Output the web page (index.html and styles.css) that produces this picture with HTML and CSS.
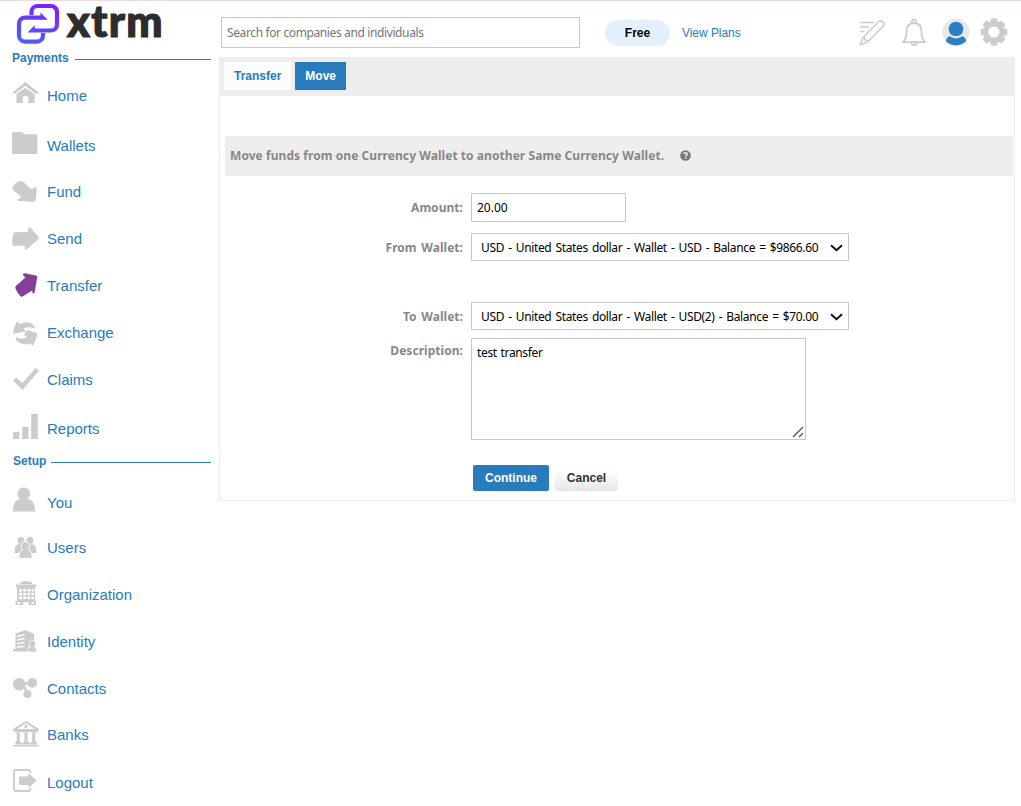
FILE: index.html
```html
<!DOCTYPE html>
<html lang="en">
<head>
    <meta charset="UTF-8">
    <meta name="viewport" content="width=device-width, initial-scale=1.0">
    <title>XTRM - Move Funds</title>
    <link rel="stylesheet" href="styles.css">
</head>

<body>
    <div class="page">
        <aside class="sidebar">
            <a class="logo" href="#">
                <svg width="44" height="42" viewBox="0 0 44 42">
                    <defs>
                        <linearGradient id="logoFill" gradientUnits="userSpaceOnUse" x1="30" y1="0" x2="14" y2="42">
                            <stop offset="0" stop-color="#7d1fff"/>
                            <stop offset="1" stop-color="#4c5ff5"/>
                        </linearGradient>
                    </defs>
                    <g fill="none" stroke="url(#logoFill)" stroke-width="4.200">
                        <path d="M25 14.600H9a6 6 0 0 0-6 6V32.600a6 6 0 0 0 6 6H21a6 6 0 0 0 6-6V30"/>
                        <path d="M18 27.500H35a6 6 0 0 0 6-6V9a6 6 0 0 0-6-6H21.500a6 6 0 0 0-6 6V12"/>
                    </g>
                    <path fill="url(#logoFill)" d="M24.500 9.500L31.700 16.700H24.500zM18.700 22.200L11.500 29.600H18.700z"/>
                </svg>
                <span class="logo-text">xtrm</span>
            </a>

            <h2 class="nav-title">Payments</h2>
            <ul class="nav">
                <li><a href="#">
                    <svg class="icon" viewBox="0 0 30 30"><path d="M2.500 11.500L15.300 1 28.300 11.300 26.300 13 15.300 4.700 4.500 13zM6.500 13L15.300 6.700 24.500 13V22H18.300V17.500a2.800 2.800 0 0 0-5.600 0V22H6.500z"/></svg>
                    Home</a></li>
                <li class="wallets"><a href="#">
                    <svg class="icon" viewBox="0 0 30 30"><path d="M2 2.500Q2 1 3.500 1H12Q13.500 1 13.500 3.200H26Q27.500 3.200 27.500 5V21.500Q27.500 23 26 23H3.500Q2 23 2 21.500z"/></svg>
                    Wallets</a></li>
                <li class="fund"><a href="#">
                    <svg class="icon" viewBox="0 0 30 30"><path d="M2.500 11Q5 5 10.500 4Q12 3.800 13 4.800L21 12Q23.500 11.500 25 10Q26.700 9.500 26.700 11.500Q26.700 18 25.500 23.500Q25 25 23.500 24.800L8.500 24Q7 23.500 8 22Q10.500 21 11 19.500L3 13Q2 12 2.500 11z"/></svg>
                    Fund</a></li>
                <li><a href="#">
                    <svg class="icon" viewBox="0 0 30 30"><path d="M2.300 20.500Q2 14 3.500 9.500Q4 8.200 5.500 8.200L18 8Q18 5.500 18.500 4Q19.500 2.700 20.700 4L28.500 13Q29.200 14.200 28.300 15.200L16.500 25.500Q14.800 26.200 14.800 24.500V21.600L4 22Q2.500 22 2.300 20.500z"/></svg>
                    Send</a></li>
                <li><a href="#">
                    <svg class="icon active" viewBox="0 0 30 30"><path d="M13 3.200Q13 2 14.500 2.200L26 4.500Q27.300 5 27.200 6.500L24.600 21.500Q24 23 22.500 22L22.300 19.500L12.500 25.500Q11 26.300 10 24.800Q6.500 21 5.300 17Q5 15.500 6.300 14.500L15.500 6.500Q13 5 13 3.200z"/></svg>
                    Transfer</a></li>
                <li><a href="#">
                    <svg class="icon" viewBox="0 0 30 30"><path d="M7.500 3L9.500 6Q19 1.500 24.800 8.500L24.500 10.500Q18 8 14 10.500Q13.500 12 16.500 13.500Q12 14 3 15.700Q4 8 7.500 3zM27.200 14.500Q26.500 22 22.500 28L20.500 25.500Q11 28 5.800 21.500L5.800 19Q12 22 16.500 19.500Q17 18 14 17Q16 12 19.500 12.500Q22 15 27.200 14.500z"/></svg>
                    Exchange</a></li>
                <li><a href="#">
                    <svg class="icon" viewBox="0 0 30 30"><path d="M3 15.500L6.300 12.500 12.300 18 25.800 3 29 5.800 12.500 25z"/></svg>
                    Claims</a></li>
                <li class="reports"><a href="#">
                    <svg class="icon" viewBox="0 0 30 30"><path d="M3.200 18H9.500V25H3.200zM12.200 13H18.500V25H12.200zM21.200 0H27.800V25H21.200z"/></svg>
                    Reports</a></li>
            </ul>

            <h2 class="nav-title setup">Setup</h2>
            <ul class="nav">
                <li><a href="#">
                    <svg class="icon" viewBox="0 0 30 30"><path d="M13.800 -.500a6.300 6.300 0 0 1 4 11.200Q25 13 25 21V23.500H3V21Q3 13 9.800 10.700A6.300 6.300 0 0 1 13.800 -.500z"/></svg>
                    You</a></li>
                <li class="users"><a href="#">
                    <svg class="icon" viewBox="0 0 30 30">
                        <circle cx="11" cy="7.500" r="3.500"/><circle cx="20" cy="7.500" r="3.500"/>
                        <path d="M5 20V15.500Q5 11 11 11H20Q26 11 26 15.500V20H5z"/>
                        <path stroke="#fff" stroke-width="1" d="M9 25.500V21.500Q9 18 13 16.800A4.200 4.500 0 1 1 18 16.800Q22 18 22 21.500V25.500z"/>
                    </svg>
                    Users</a></li>
                <li><a href="#">
                    <svg class="icon" viewBox="0 0 30 30"><path fill-rule="evenodd" d="M10 2.500Q16 -.5 22 2.500V4H10zM6 4.500H26V7H6zM7 7H25V21H7zM9 9V11.500H12V9zM13.300 9V11.500H16.300V9zM17.600 9V11.500H20.300V9zM21.600 9V11.500H23.800V9zM9 12.800V15.300H12V12.800zM13.300 12.800V15.300H16.300V12.800zM17.600 12.800V15.300H20.300V12.800zM21.600 12.800V15.300H23.800V12.800zM9 16.600V19H12V16.600zM13.300 16.600V19H16.300V16.600zM17.600 16.600V19H20.300V16.600zM21.600 16.600V19H23.800V16.600z"/><path fill-rule="evenodd" d="M5.500 21H26V25H18.500V22H13V25H5.500zM7.500 22V24H10V22zM21.500 22V24H24V22z"/></svg>
                    Organization</a></li>
                <li><a href="#">
                    <svg class="icon" viewBox="0 0 30 30">
                        <path d="M5.500 6.500L16 3V23.500H5.500zM16 3L24 7V13Q20 13 19.500 18L18 21V23.500H16zM3 22H20V24.500H3z"/>
                        <path fill="none" stroke="#fff" stroke-width="1.300" d="M7 9.500L14.500 7.500M7 13L14.500 11.500M7 16.600L14.500 15.500M7 20L14.500 19.500"/>
                        <path stroke="#fff" stroke-width=".6" d="M18 25V22.500Q18 20.500 20.500 19.800A3.200 3.500 0 1 1 24 19.800Q26.600 20.500 26.600 22.500V25z"/>
                    </svg>
                    Identity</a></li>
                <li><a href="#">
                    <svg class="icon" viewBox="0 0 30 30"><circle cx="9.300" cy="10.300" r="6.300"/><circle cx="22.300" cy="8.800" r="4.900"/><circle cx="17.500" cy="20" r="4"/><path fill="none" stroke="#ccc" stroke-width="2.500" d="M10 10L22 9M13 11L18 20"/></svg>
                    Contacts</a></li>
                <li class="banks"><a href="#">
                    <svg class="icon" viewBox="0 0 30 30">
                        <path fill-rule="evenodd" d="M3 9L16 1 29 9V10.500H3zM7 9H25L16 3.200zM4 10.500H28V12H4zM5 23H27.500V24.500H5zM3 25H29V26.500H3z"/>
                        <circle cx="16" cy="6.500" r="1.700"/>
                        <path d="M6 12.500H10.500V13.500H6zM13.800 12.500H18.300V13.500H13.800zM21.500 12.500H26V13.500H21.500zM6.700 13H9.800V23H6.700zM14.500 13H17.600V23H14.500zM22.200 13H25.300V23H22.200zM5.700 21.500H10.800V23H5.700zM13.500 21.500H18.600V23H13.500zM21.200 21.500H26.300V23H21.200z"/>
                    </svg>
                    Banks</a></li>
                <li class="logout"><a href="#">
                    <svg class="icon" viewBox="0 0 30 30"><path fill="none" stroke="#ccc" stroke-width="1.800" d="M20.500 5V3.500Q20.500 2 19 2H5.500Q4 2 4 3.500V21.500Q4 23 5.500 23H19Q20.500 23 20.500 21.500V20"/><path d="M9 9.500Q9 8.500 10 8.500H18.500V5L26.500 12.500 18.500 20V17H10Q9 17 9 16z"/></svg>
                    Logout</a></li>
            </ul>
        </aside>

        <main class="content">
            <header class="topbar">
                <input type="text" class="search" placeholder="Search for companies and individuals">
                <span class="plan">Free</span>
                <a class="view-plans" href="#">View Plans</a>
                <div class="top-icons">
                    <svg width="28" height="30" viewBox="0 0 28 30" fill="none" stroke="#ccc" stroke-width="1.500" stroke-linejoin="round">
                        <path d="M2 5.500H16M2 10H11M2 14.500H6.500"/>
                        <path d="M2.500 27.500L5 20.500 20.800 4.500Q23 3 25 5Q27 7 25.200 9.300L9.500 25zM5 20.500Q7.500 21 7 23Q9.500 22.500 9.500 25"/>
                    </svg>
                    <svg width="26" height="30" viewBox="0 0 26 30" fill="none" stroke="#ccc" stroke-width="1.800" stroke-linejoin="round">
                        <path d="M2 25.200Q5.500 22 5.500 14.500Q5.500 6 13 6Q20.500 6 20.500 14.500Q20.500 22 24 25.200zM11 6V4.500Q11 2.500 13 2.500Q15 2.500 15 4.500V6M10.500 25.500Q10.500 28.200 13 28.200Q15.500 28.200 15.500 25.500"/>
                    </svg>
                    <svg width="28" height="28" viewBox="0 0 28 28">
                        <circle cx="14" cy="14" r="13.500" fill="#e8e8e8"/>
                        <g fill="#2c7fc4"><circle cx="14" cy="11" r="7.300"/><path d="M7.500 18.300Q14 22.500 20.500 18.300Q23.500 19.300 24.200 23Q20 27.400 14 27.400Q8 27.400 3.800 23Q4.500 19.300 7.500 18.300z"/></g>
                    </svg>
                    <svg width="28" height="28" viewBox="-14 -14 28 28">
                        <g fill="#ccc">
                            <g id="teeth"><rect x="-3.300" y="-13.400" width="6.600" height="26.800" rx="1.600"/><rect x="-13.400" y="-3.300" width="26.800" height="6.600" rx="1.600"/></g>
                            <use href="#teeth" transform="rotate(45)"/>
                            <circle r="11"/>
                        </g>
                        <circle r="5.600" fill="#fff"/>
                    </svg>
                </div>
            </header>

            <section class="panel">
                <nav class="tabs">
                    <a class="tab" href="#">Transfer</a>
                    <a class="tab selected" href="#">Move</a>
                </nav>

                <h1 class="panel-title">
                    <span>Move funds from one Currency Wallet to another Same Currency Wallet.</span>
                    <svg width="11" height="11" viewBox="0 0 11 11"><circle cx="5.500" cy="5.500" r="5.300" fill="#777"/><path d="M3.700 4.300Q3.800 2.700 5.500 2.700Q7.300 2.700 7.300 4.100Q7.300 5 6.200 5.500Q5.600 5.800 5.600 6.500M5.600 7.500V8.900" fill="none" stroke="#eee" stroke-width="1.500"/></svg>
                </h1>

                <form>
                    <div class="row">
                        <label for="amount">Amount:</label>
                        <input type="text" id="amount" class="amount" value="20.00">
                    </div>
                    <div class="row from">
                        <label for="fromWallet">From Wallet:</label>
                        <div class="select">
                            <select id="fromWallet"><option>USD - United States dollar - Wallet - USD - Balance = $9866.60</option></select>
                            <svg class="chevron" viewBox="0 0 13 8"><path d="M1 1.200L6.500 6.200 12 1.200"/></svg>
                        </div>
                    </div>
                    <div class="row to">
                        <label for="toWallet">To Wallet:</label>
                        <div class="select">
                            <select id="toWallet"><option>USD - United States dollar - Wallet - USD(2) - Balance = $70.00</option></select>
                            <svg class="chevron" viewBox="0 0 13 8"><path d="M1 1.200L6.500 6.200 12 1.200"/></svg>
                        </div>
                    </div>
                    <div class="row description">
                        <label for="description">Description:</label>
                        <div class="area">
                            <textarea id="description">test transfer</textarea>
                            <svg class="grip" viewBox="0 0 12 12"><path d="M1 11L11 1M7 11L11 7"/></svg>
                        </div>
                    </div>
                    <div class="buttons">
                        <button type="button" class="continue">Continue</button>
                        <button type="button" class="cancel">Cancel</button>
                    </div>
                </form>
            </section>
        </main>
    </div>
</body>

</html>
```
FILE: styles.css
```css
* {
    box-sizing: border-box;
}

body {
    margin: 0;
    border-top: 1px solid #f5dadd;
    background: #fff;
    font-family: "Liberation Sans", Arial, sans-serif;
    font-size: 12px;
}

a {
    color: #287bbd;
    text-decoration: none;
}

.page {
    display: flex;
    height: 805px;
}

/* sidebar */
.sidebar {
    width: 219px;
    flex: none;
}

.logo {
    display: flex;
    align-items: flex-start;
    height: 47px;
    padding: 2px 0 0 16px;
}

.logo svg {
    flex: none;
}

.logo-text {
    margin-left: 7px;
    font-family: Lato, sans-serif;
    font-size: 43px;
    font-weight: 900;
    line-height: 36px;
    letter-spacing: 1.3px;
    color: #2d2d2d;
    -webkit-text-stroke: 1.2px #2d2d2d;
}

.nav-title {
    display: flex;
    align-items: center;
    gap: 6px;
    height: 20px;
    margin: 0 8px 0 12px;
    font-size: 12px;
    color: #287bbd;
}

.nav-title::after {
    content: "";
    flex: 1;
    height: 1px;
    margin-top: 3px;
    background: #287bbd;
}

.nav-title.setup {
    gap: 5px;
    margin: -1px 8px 0 13px;
}

.nav {
    display: flex;
    flex-direction: column;
    gap: 1px;
    margin: 0;
    padding: 5px 0 0 10px;
    list-style: none;
}

.setup + .nav {
    padding-top: 9px;
}

.nav a {
    display: flex;
    align-items: center;
    gap: 7px;
    height: 46px;
    padding-bottom: 2px;
    font-size: 15px;
}

.nav .wallets {
    margin-top: 3px;
}

.nav .fund,
.nav .banks {
    margin-top: -1px;
}

.nav .reports {
    margin-top: 2px;
}

.nav .users {
    margin-top: -2px;
}

.nav .logout {
    margin-top: 1px;
}

.icon {
    width: 30px;
    height: 30px;
    flex: none;
    margin-top: 2px;
    overflow: visible;
    fill: #ccc;
}

.icon.active {
    fill: #843f97;
}

/* top bar */
.content {
    width: 796px;
}

.topbar {
    display: flex;
    align-items: center;
    height: 56px;
    padding: 7px 7px 0 2px;
}

.search {
    width: 359px;
    height: 31px;
    padding: 0 5px;
    border: 1px solid #c8c8c8;
    font: 12px "Noto Sans", sans-serif;
    letter-spacing: -.38px;
}

.search::placeholder {
    color: #757575;
}

.plan {
    width: 65px;
    margin-left: 25px;
    border-radius: 13px;
    background: #e3f0fd;
    font-weight: bold;
    line-height: 26px;
    text-align: center;
}

.view-plans {
    margin-left: 12px;
    letter-spacing: -.05px;
}

.top-icons {
    display: flex;
    align-items: center;
    gap: 15px;
    margin: -2px 0 0 auto;
}

.top-icons svg:last-child {
    margin-left: -5px;
}

/* panel */
.panel {
    height: 444px;
    border: 1px solid #eee;
    border-top: 0;
}

.tabs {
    display: flex;
    gap: 4px;
    height: 39px;
    padding: 5px 4px;
    background: #eee;
}

.tab {
    height: 28px;
    padding: 0 10px;
    background: #fcfcfc;
    font-weight: bold;
    line-height: 28px;
}

.tab.selected {
    background: #287bbd;
    color: #fff;
}

.panel-title {
    display: flex;
    align-items: center;
    gap: 16px;
    height: 40px;
    margin: 40px 1px 17px 5px;
    padding: 0 0 2px 5px;
    background: #eee;
    font: bold 12px "Noto Sans", sans-serif;
    letter-spacing: .06px;
    color: #8b8686;
}

.row {
    display: flex;
    gap: 8px;
}

.row label {
    width: 243px;
    font: bold 12px/30px "Noto Sans", sans-serif;
    letter-spacing: .04px;
    word-spacing: 1.5px;
    color: #8b8686;
    text-align: right;
}

.amount {
    width: 155px;
    height: 29px;
    padding: 0 5px;
    border: 1px solid #c8c8c8;
    font: 12px "Noto Sans", sans-serif;
}

/* fixed heights, the labels are taller than the fields */
.row:first-child {
    height: 29px;
}

.from,
.to {
    height: 28px;
}

.from {
    margin-top: 11px;
}

.to {
    margin-top: 41px;
}

.description {
    margin-top: 8px;
}

.description label {
    line-height: 25px;
}

.select,
.area {
    position: relative;
}

select {
    display: block;
    width: 378px;
    height: 28px;
    padding: 0 9px;
    border: 1px solid #c8c8c8;
    border-radius: 0;
    background: #fff;
    appearance: none;
    font: 12px "Noto Sans", sans-serif;
    letter-spacing: -.35px;
    word-spacing: 1.3px;
    color: #000;
}

.chevron {
    position: absolute;
    top: 11px;
    right: 6px;
    width: 13px;
    height: 8px;
    fill: none;
    stroke: #111;
    stroke-width: 2;
}

textarea {
    display: block;
    width: 335px;
    height: 102px;
    padding: 5px;
    border: 1px solid #c8c8c8;
    resize: none;
    font: 12px "Noto Sans", sans-serif;
    letter-spacing: -.35px;
    word-spacing: 1px;
}

.grip {
    position: absolute;
    right: 2px;
    bottom: 2px;
    width: 12px;
    height: 12px;
    stroke: #555;
    stroke-width: 1.4;
}

.buttons {
    display: flex;
    gap: 6px;
    margin: 25px 0 0 253px;
}

button {
    height: 26px;
    padding: 0;
    border: 0;
    border-radius: 2px;
    font: bold 12px "Liberation Sans", Arial, sans-serif;
}

.continue {
    width: 76px;
    background: #287bbd;
    color: #fff;
}

.cancel {
    width: 63px;
    background: linear-gradient(#fff 20%, #e6e6e6);
    color: #333;
}
```
